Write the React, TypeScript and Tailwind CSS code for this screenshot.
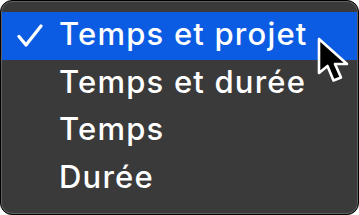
import React from "react";

const items = ["Temps et projet", "Temps et durée", "Temps", "Durée"];

function Check() {
  return (
    <svg className="w-[28px] h-[24px]" viewBox="0 0 28 24" fill="none">
      <path
        d="M3 12.5 L10 21 L25 2"
        stroke="white"
        strokeWidth="3.2"
        strokeLinecap="round"
        strokeLinejoin="round"
      />
    </svg>
  );
}

function Cursor() {
  return (
    <svg
      className="absolute left-[315px] top-[35px] w-[42px] h-[52px]"
      viewBox="0 0 42 52"
      fill="none"
    >
      <path
        d="M4 4 L4 38 L12.5 31 L18.5 45.5 L26 42.5 L20 29 L32 29 Z"
        fill="black"
        stroke="white"
        strokeWidth="2.6"
        strokeLinejoin="round"
      />
    </svg>
  );
}

export default function App() {
  return (
    <div className="w-[359px] h-[215px] bg-white relative">
      <div className="w-full h-full rounded-[12px] border border-black bg-[#3a3a3a] shadow-[inset_0_0_0_1px_#606060] pt-[11px] px-[1px] overflow-hidden">
        {items.map((label, i) => (
          <div
            key={label}
            className={
              "h-[47.5px] flex items-center pl-[14px] " +
              (i === 0 ? "bg-[#0b5ce3]" : "")
            }
          >
            <div className="w-[43px] flex items-center">
              {i === 0 && <Check />}
            </div>
            <span
              className="text-white text-[31px] tracking-[1.2px] font-medium leading-none pb-[4px]"
              style={{ fontFamily: "Inter, 'Noto Sans', sans-serif" }}
            >
              {label}
            </span>
          </div>
        ))}
      </div>
      <Cursor />
    </div>
  );
}
